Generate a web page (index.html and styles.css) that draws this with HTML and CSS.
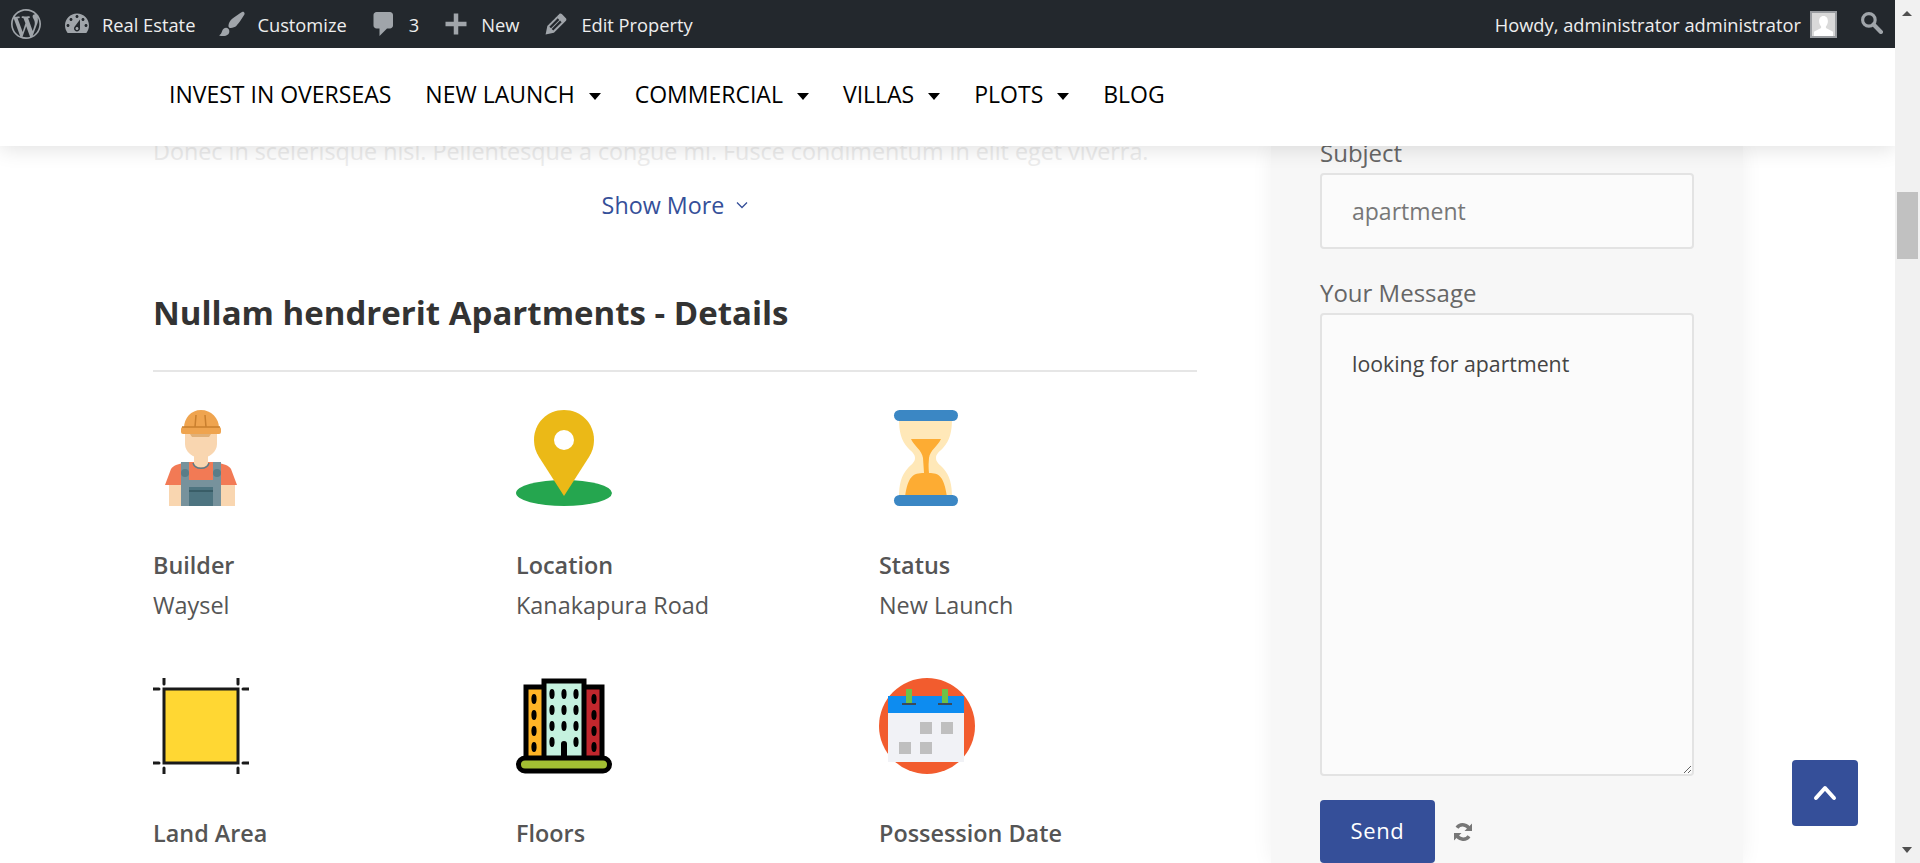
FILE: index.html
```html
<!DOCTYPE html>
<html lang="en">
<head>
    <meta charset="UTF-8">
    <meta name="viewport" content="width=device-width, initial-scale=1.0">
    <title>Nullam hendrerit Apartments</title>
    <link rel="stylesheet" href="styles.css">
</head>
<body>
    <div class="window">
        <div class="page">
            <div class="admin-bar">
                <div class="admin-left">
                    <svg class="wp-logo" viewBox="0 0 20 20"><path d="M20 10c0-5.51-4.49-10-10-10C4.48 0 0 4.49 0 10c0 5.52 4.48 10 10 10 5.51 0 10-4.48 10-10zM7.78 15.37L4.37 6.22c.55-.02 1.17-.08 1.17-.08.5-.06.44-1.13-.06-1.11 0 0-1.45.11-2.37.11-.18 0-.37 0-.58-.01C4.12 2.69 6.87 1.11 10 1.11c2.33 0 4.45.87 6.05 2.34-.68-.11-1.65.39-1.65 1.58 0 .74.45 1.36.9 2.1.35.61.55 1.36.55 2.46 0 1.49-1.4 5-1.4 5l-3.03-8.37c.54-.02.82-.17.82-.17.5-.05.44-1.25-.06-1.22 0 0-1.44.12-2.38.12-.87 0-2.33-.12-2.33-.12-.5-.03-.56 1.2-.06 1.22l.92.08 1.26 3.41zM17.41 10c.24-.64.74-1.87.43-4.25.7 1.29 1.05 2.71 1.05 4.25 0 3.29-1.73 6.24-4.4 7.78.97-2.59 1.94-5.2 2.92-7.78zM6.1 18.09C3.12 16.65 1.11 13.53 1.11 10c0-1.3.23-2.48.72-3.59C3.25 10.3 4.67 14.2 6.1 18.09zm4.03-6.63l2.58 6.98c-.86.29-1.76.45-2.71.45-.79 0-1.57-.11-2.29-.33.81-2.38 1.62-4.74 2.42-7.1z"/></svg>
                    <a class="admin-item"><svg viewBox="0 0 20 20"><path d="M3.76 16h12.48c1.1-1.37 1.76-3.11 1.76-5 0-4.42-3.58-8-8-8s-8 3.58-8 8c0 1.89.66 3.63 1.76 5zM10 4c.55 0 1 .45 1 1s-.45 1-1 1-1-.45-1-1 .45-1 1-1zM6 6c.55 0 1 .45 1 1s-.45 1-1 1-1-.45-1-1 .45-1 1-1zm8 0c.55 0 1 .45 1 1s-.45 1-1 1-1-.45-1-1 .45-1 1-1zm-5.37 5.55L12 7v6c0 1.1-.9 2-2 2s-2-.9-2-2c0-.57.24-1.08.63-1.45zM4 10c.55 0 1 .45 1 1s-.45 1-1 1-1-.45-1-1 .45-1 1-1zm12 0c.55 0 1 .45 1 1s-.45 1-1 1-1-.45-1-1 .45-1 1-1zm-5 3c0-.55-.45-1-1-1s-1 .45-1 1 .45 1 1 1 1-.45 1-1z"/></svg>Real Estate</a>
                    <a class="admin-item"><svg viewBox="0 0 20 20"><path d="M18.33 3.57s.27-.8-.31-1.36c-.53-.52-1.22-.24-1.22-.24-.61.3-5.76 3.47-7.67 5.57-.86.96-2.06 3.79-1.09 4.82.92.98 3.96-.17 4.79-1 2.06-2.06 5.21-7.17 5.5-7.79zM1.4 17.65c2.37-1.56 1.46-3.41 3.23-4.64.93-.65 2.22-.62 3.08.29.63.67.8 2.57-.16 3.46-1.57 1.45-4 1.55-6.15.89z"/></svg>Customize</a>
                    <a class="admin-item"><svg viewBox="0 0 20 20"><path d="M5 2h9c1.1 0 2 .9 2 2v7c0 1.1-.9 2-2 2h-2l-5 5v-5H5c-1.1 0-2-.9-2-2V4c0-1.1.9-2 2-2z"/></svg>3</a>
                    <a class="admin-item"><svg viewBox="0 0 20 20"><path d="M17 8.500v3h-5.500V17h-3v-5.500H3v-3h5.500V3h3v5.500z"/></svg>New</a>
                    <a class="admin-item"><svg viewBox="0 0 20 20"><path d="M13.89 3.39l2.71 2.72c.46.46.42 1.24.03 1.64l-8.01 8.02-5.56 1.16 1.16-5.58s7.6-7.63 7.99-8.03c.39-.39 1.22-.39 1.68.07zm-2.73 2.79l-5.59 5.61 1.11 1.11 5.54-5.65zm-2.97 8.23l5.58-5.6-1.07-1.08-5.59 5.6z"/></svg>Edit Property</a>
                </div>
                <div class="admin-right">
                    <span>Howdy, administrator administrator</span>
                    <svg class="avatar" viewBox="0 0 27 27"><rect width="27" height="27" fill="#9a9da1"/><rect x="2" y="2" width="23" height="23" fill="#d9d9d9"/><path d="M13.5 5c3 0 4.4 2.4 4.4 5.3 0 2.200-1 4-2 5.100v1.600c1.500 1.200 5.100 2.200 7.100 3.700V25H4v-4.300c2-1.500 5.600-2.500 7.100-3.700v-1.600c-1-1.100-2-2.900-2-5.100C9.100 7.400 10.500 5 13.500 5z" fill="#fff"/></svg>
                    <svg class="search-icon" viewBox="0 0 22 22"><circle cx="8.500" cy="8.500" r="6" fill="none" stroke="#a0a5aa" stroke-width="3"/><path d="M13 13l7 7" stroke="#a0a5aa" stroke-width="4" stroke-linecap="round"/></svg>
                </div>
            </div>

            <nav class="main-nav">
                <a>INVEST IN OVERSEAS</a>
                <a class="has-sub">NEW LAUNCH</a>
                <a class="has-sub">COMMERCIAL</a>
                <a class="has-sub">VILLAS</a>
                <a class="has-sub">PLOTS</a>
                <a>BLOG</a>
            </nav>

            <div class="content">
                <main class="details">
                    <p class="faded-text">Donec in scelerisque nisl. Pellentesque a congue mi. Fusce condimentum in elit eget viverra.</p>
                    <a class="show-more">Show More <svg viewBox="0 0 12 8"><path d="M1 1.500l5 5 5-5" fill="none" stroke="#354f99" stroke-width="1.300"/></svg></a>
                    <h2>Nullam hendrerit Apartments - Details</h2>
                    <div class="detail-grid">
                        <div class="detail">
                            <svg class="detail-icon" viewBox="0 0 96 96">
                                <path d="M16 75h66v21H16z" fill="#f9d6b0"/>
                                <path d="M12 75l6-16c1-2 3-3 5-4l10-3h30l10 3c2 1 4 2 5 4l6 16z" fill="#f27a55"/>
                                <path d="M28 52h8v18h24V52h8v44H28z" fill="#77929c"/>
                                <path d="M36 77h24v19H36z" fill="#4d7480"/>
                                <path d="M36 81h24" stroke="#33565f" stroke-width="1.500"/>
                                <circle cx="32" cy="63" r="4" fill="#5a7d88"/>
                                <circle cx="64" cy="63" r="4" fill="#5a7d88"/>
                                <path d="M41 44h14v10c-2 5-12 5-14 0z" fill="#f9d6b0"/>
                                <path d="M40 53c2 7 14 7 16 0" fill="none" stroke="#5d7d88" stroke-width="1.500"/>
                                <path d="M32 22h32v12c0 8-8 14-16 14s-16-6-16-14z" fill="#f9d6b0"/>
                                <path d="M37 24h21l-2 3H39z" fill="#e0b078"/>
                                <path d="M31 18C31 8 38 0 48 0s18 8 18 18z" fill="#efa44f"/>
                                <rect x="28" y="17" width="40" height="7" rx="2" fill="#efa44f"/>
                                <path d="M42 17l1-12M53 17l-1-12M29 17h38" fill="none" stroke="#c97f2e" stroke-width="1.500"/>
                            </svg>
                            <strong>Builder</strong>
                            <span>Waysel</span>
                        </div>
                        <div class="detail">
                            <svg class="detail-icon" viewBox="0 0 96 96">
                                <ellipse cx="48" cy="83" rx="48" ry="13" fill="#25a64f"/>
                                <path d="M48 0c17 0 30 13 30 30 0 7-2 12-5 17L48 86 23 47c-3-5-5-10-5-17C18 13 31 0 48 0z" fill="#ebb917"/>
                                <circle cx="48" cy="30" r="10" fill="#fff"/>
                            </svg>
                            <strong>Location</strong>
                            <span>Kanakapura Road</span>
                        </div>
                        <div class="detail">
                            <svg class="detail-icon" viewBox="0 0 96 96">
                                <path d="M20 8h53c0 14-2 22-9 30-4 4-7 6-7 10s3 6 7 10c7 8 9 16 9 30H20c0-14 2-22 9-30 4-4 7-6 7-10s-3-6-7-10c-7-8-9-16-9-30z" fill="#ffe8b8"/>
                                <path d="M32 29h30c-3 7-11 11-12 19l-1 15h-4l-1-15c-1-8-9-12-12-19z" fill="#fdac33"/>
                                <path d="M45 54h4l1 9c10 0 15 3 18 24H26c3-21 8-24 19-24z" fill="#fdac33"/>
                                <rect x="15" width="64" height="11" rx="5.500" fill="#3b87c4"/>
                                <rect x="15" y="85" width="64" height="11" rx="5.500" fill="#3b87c4"/>
                            </svg>
                            <strong>Status</strong>
                            <span>New Launch</span>
                        </div>
                        <div class="detail">
                            <svg class="detail-icon" viewBox="0 0 96 96">
                                <rect x="11" y="11" width="74" height="74" fill="#ffd733" stroke="#1a1a1a" stroke-width="3"/>
                                <path d="M11 0v6M85 0v6M11 90v6M85 90v6M0 11h6M90 11h6M0 85h6M90 85h6" stroke="#1a1a1a" stroke-width="3" stroke-linecap="round"/>
                            </svg>
                            <strong>Land Area</strong>
                        </div>
                        <div class="detail">
                            <svg class="detail-icon" viewBox="0 0 96 96">
                                <rect x="10" y="9" width="22" height="78" fill="#ffb526" stroke="#000" stroke-width="5"/>
                                <rect x="64" y="9" width="22" height="78" fill="#c1272d" stroke="#000" stroke-width="5"/>
                                <rect x="28" y="3" width="40" height="84" fill="#c5f2df" stroke="#000" stroke-width="5"/>
                                <rect x="2.500" y="80" width="91" height="13" rx="6.500" fill="#a2bf33" stroke="#000" stroke-width="5"/>
                                <path d="M45 80V66a3 3 0 0 1 6 0v14z" fill="#000"/>
                                <g fill="#000">
                                    <ellipse cx="18" cy="21" rx="2.600" ry="5"/><ellipse cx="18" cy="37" rx="2.600" ry="5"/><ellipse cx="18" cy="53" rx="2.600" ry="5"/><ellipse cx="18" cy="69" rx="2.600" ry="5"/>
                                    <ellipse cx="78" cy="21" rx="2.600" ry="5"/><ellipse cx="78" cy="37" rx="2.600" ry="5"/><ellipse cx="78" cy="53" rx="2.600" ry="5"/><ellipse cx="78" cy="69" rx="2.600" ry="5"/>
                                    <ellipse cx="36" cy="16" rx="2.600" ry="5"/><ellipse cx="48" cy="16" rx="2.600" ry="5"/><ellipse cx="60" cy="16" rx="2.600" ry="5"/>
                                    <ellipse cx="36" cy="32" rx="2.600" ry="5"/><ellipse cx="48" cy="32" rx="2.600" ry="5"/><ellipse cx="60" cy="32" rx="2.600" ry="5"/>
                                    <ellipse cx="36" cy="48" rx="2.600" ry="5"/><ellipse cx="48" cy="48" rx="2.600" ry="5"/><ellipse cx="60" cy="48" rx="2.600" ry="5"/>
                                    <ellipse cx="36" cy="64" rx="2.600" ry="5"/><ellipse cx="60" cy="64" rx="2.600" ry="5"/>
                                </g>
                            </svg>
                            <strong>Floors</strong>
                        </div>
                        <div class="detail">
                            <svg class="detail-icon" viewBox="0 0 96 96">
                                <circle cx="48" cy="48" r="48" fill="#f25c2e"/>
                                <path d="M9 30h76v54H9z" fill="#f1f2f6"/>
                                <path d="M9 18h76v17H9z" fill="#0d8cf0"/>
                                <path d="M27 11h6v14h-6zM63 11h6v14h-6z" fill="#6cc24a"/>
                                <path d="M23 25h14v2H23zM59 25h14v2H59z" fill="#3a4a5a"/>
                                <path d="M41 44h12v12H41zM62 44h12v12H62zM20 64h12v12H20zM41 64h12v12H41z" fill="#bfbfbf"/>
                            </svg>
                            <strong>Possession Date</strong>
                        </div>
                    </div>
                </main>

                <aside class="enquiry">
                    <label class="field-label first">Subject</label>
                    <input class="field-input" type="text" value="apartment">
                    <label class="field-label">Your Message</label>
                    <textarea class="field-area">looking for apartment</textarea>
                    <div class="form-actions">
                        <button class="send-btn">Send</button>
                        <svg class="refresh-icon" viewBox="0 0 20 20"><path d="M16.500 8A7 7 0 0 0 4 5.800M3.500 12A7 7 0 0 0 16 14.200" fill="none" stroke="#777" stroke-width="3.500"/><path d="M19 1.500V9h-7.500zM1 18.500V11h7.500z" fill="#777"/></svg>
                    </div>
                </aside>
            </div>

            <a class="scroll-top"><svg viewBox="0 0 24 16"><path d="M3 13l9-10 9 10" fill="none" stroke="#fff" stroke-width="4" stroke-linecap="round" stroke-linejoin="round"/></svg></a>
        </div>

        <div class="scrollbar">
            <span class="arrow-up"></span>
            <span class="thumb"></span>
            <span class="arrow-down"></span>
        </div>
    </div>
</body>
</html>
```

FILE: styles.css
```css
html, body {
    margin: 0;
    height: 100%;
    overflow: hidden;
}
body {
    font-family: 'Open Sans', 'Liberation Sans', sans-serif;
    color: #555;
    background: #fff;
}
.window {
    display: flex;
    height: 863px;
}
.page {
    flex: 1;
    position: relative;
    display: flex;
    flex-direction: column;
    overflow: hidden;
}

/* admin bar */
.admin-bar {
    flex: 0 0 48px;
    display: flex;
    justify-content: space-between;
    align-items: center;
    background: #23282d;
    color: #eee;
    font-size: 18.3px;
    position: relative;
    z-index: 3;
}
.admin-left {
    display: flex;
    align-items: center;
    padding-left: 11px;
}
.admin-left svg {
    fill: #a0a5aa;
}
.wp-logo {
    width: 30px;
    height: 30px;
    margin-right: 21px;
}
.admin-item {
    display: flex;
    align-items: center;
    gap: 10px;
    margin-right: 22px;
}
.admin-item svg {
    width: 30px;
    height: 30px;
}
.admin-right {
    display: flex;
    align-items: center;
    padding-right: 13px;
}
.avatar {
    width: 27px;
    height: 27px;
    margin-left: 9px;
}
.search-icon {
    width: 23px;
    height: 23px;
    margin: 0 -1px 3px 23px;
}

/* main menu */
.main-nav {
    flex: 0 0 92px;
    display: flex;
    align-items: center;
    gap: 34px;
    padding: 0 0 6px 169px;
    background: #fff;
    box-shadow: 0 3px 20px rgba(0, 0, 0, 0.12);
    font-size: 23px;
    color: #000;
    position: relative;
    z-index: 2;
}
.has-sub::after {
    content: "";
    display: inline-block;
    margin-left: 14px;
    vertical-align: 3px;
    border-left: 6.5px solid transparent;
    border-right: 6.5px solid transparent;
    border-top: 7px solid #000;
}

/* content */
.content {
    flex: 1;
    display: flex;
    min-height: 0;
}
.details {
    width: 1044px;
    margin-left: 153px;
}
.faded-text {
    margin: -8px 0 0;
    font-size: 23.3px;
    line-height: 27px;
    color: #ececec;
    white-space: nowrap;
}
.show-more {
    display: flex;
    justify-content: center;
    align-items: center;
    gap: 12px;
    margin-top: 25px;
    font-size: 23.3px;
    line-height: 30px;
    color: #354f99;
}
.show-more svg {
    width: 12px;
    height: 8px;
}
h2 {
    margin: 72px 0 0;
    padding-bottom: 36px;
    border-bottom: 2px solid #e6e6e6;
    font-size: 33px;
    line-height: 42px;
    font-weight: 700;
    color: #333;
}
.detail-grid {
    display: grid;
    grid-template-columns: repeat(3, 363px);
    row-gap: 58px;
    margin-top: 38px;
}
.detail {
    display: flex;
    flex-direction: column;
    font-size: 23.4px;
    line-height: 30px;
}
.detail-icon {
    width: 96px;
    height: 96px;
    margin-bottom: 44px;
}
.detail strong {
    font-weight: 600;
    margin-bottom: 10px;
}

/* enquiry form */
.enquiry {
    width: 472px;
    box-sizing: border-box;
    margin-left: 74px;
    padding: 0 49px;
    background: #f7f7f7;
    box-shadow: 0 0 20px rgba(0, 0, 0, 0.06);
    display: flex;
    flex-direction: column;
}
.field-label {
    font-size: 24px;
    line-height: 30px;
    color: #666;
    margin-top: 29px;
    margin-bottom: 5px;
}
.field-label.first {
    margin-top: -8px;
}
.field-input,
.field-area {
    box-sizing: border-box;
    width: 100%;
    border: 2px solid #e3e3e3;
    border-radius: 4px;
    background: #fbfbfb;
    padding: 0 30px;
    font-family: inherit;
    font-size: 23px;
    color: #777;
}
.field-input {
    height: 76px;
}
.field-area {
    height: 464px;
    padding-top: 34px;
    font-size: 21.3px;
    color: #444;
}
.form-actions {
    display: flex;
    align-items: center;
    gap: 18px;
    margin-top: 24px;
}
.send-btn {
    width: 115px;
    height: 63px;
    padding: 0 0 3px;
    border: none;
    border-radius: 4px;
    background: #354f99;
    color: #fff;
    font-family: inherit;
    font-size: 22px;
    letter-spacing: 0.6px;
}
.refresh-icon {
    width: 20px;
    height: 20px;
}
.scroll-top {
    position: absolute;
    left: 1792px;
    top: 760px;
    width: 66px;
    height: 66px;
    border-radius: 4px;
    background: #354f99;
    display: flex;
    justify-content: center;
    align-items: center;
    z-index: 4;
}
.scroll-top svg {
    width: 24px;
    height: 16px;
}

/* scrollbar */
.scrollbar {
    flex: 0 0 25px;
    position: relative;
    background: #f1f1f1;
}
.thumb {
    position: absolute;
    left: 2px;
    right: 2px;
    top: 192px;
    height: 67px;
    background: #c1c1c1;
}
.arrow-up,
.arrow-down {
    position: absolute;
    left: 7px;
    border-left: 5.5px solid transparent;
    border-right: 5.5px solid transparent;
}
.arrow-up {
    top: 11px;
    border-bottom: 5px solid #505050;
}
.arrow-down {
    top: 847px;
    border-top: 6px solid #505050;
}
```
